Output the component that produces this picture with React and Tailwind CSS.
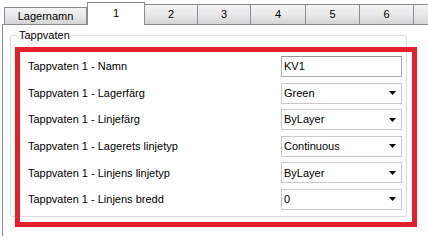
import React from 'react';

const tabs = ['Lagernamn', '1', '2', '3', '4', '5', '6', ''];

const rows = [
  { label: 'Tappvaten 1 - Namn', value: 'KV1', kind: 'text' },
  { label: 'Tappvaten 1 - Lagerfärg', value: 'Green' },
  { label: 'Tappvaten 1 - Linjefärg', value: 'ByLayer' },
  { label: 'Tappvaten 1 - Lagerets linjetyp', value: 'Continuous' },
  { label: 'Tappvaten 1 - Linjens linjetyp', value: 'ByLayer' },
  { label: 'Tappvaten 1 - Linjens bredd', value: '0' },
];

const tabWidths = {
  Lagernamn: 'w-[83px] h-[17px] border-l',
  '1': 'w-[58px]',
  '2': 'w-[53px] h-[20px]',
  '3': 'w-[53px] h-[20px]',
  '4': 'w-[55px] h-[20px]',
  '5': 'w-[54px] h-[20px]',
  '6': 'w-[54px] h-[20px]',
  '': 'w-[60px] h-[20px]',
};

const Arrow = () => (
  <svg width="7" height="4" viewBox="0 0 7 4" className="shrink-0">
    <path d="M0 0h7L3.5 4z" fill="#000" />
  </svg>
);

const Field = ({ value, kind }) => {
  if (kind === 'text') {
    return (
      <div className="w-[121px] h-[21px] border border-[#abadb3] border-t-[#8e949c] bg-white flex items-center pl-[2px]">
        {value}
      </div>
    );
  }
  return (
    <div className="w-[121px] h-[21px] border border-[#cacaca] bg-white flex items-center justify-between pl-[2px] pr-[5px]">
      <span>{value}</span>
      <Arrow />
    </div>
  );
};

export default function App() {
  return (
    <div
      className="relative w-[428px] h-[236px] overflow-hidden bg-white text-[11px] text-black"
      style={{ fontFamily: '"Liberation Sans", Arial, sans-serif' }}
    >
      {/* tab strip */}
      <div className="ml-[2px] pl-[2px] h-[25px] flex items-end border-b border-[#898c95]">
        {tabs.map((tab) => {
          const selected = tab === '1';
          return (
            <div
              key={tab || 'more'}
              className={`shrink-0 flex items-center justify-center border-t border-[#898c95] ${tabWidths[tab]} ${
                selected
                  ? 'h-[23px] -mb-px relative z-10 bg-white border-l border-r pb-[2px]'
                  : 'border-r bg-linear-to-b from-[#f4f4f4] via-[#e9e9e9] to-[#d4d4d4]'
              }`}
            >
              {tab}
            </div>
          );
        })}
      </div>

      {/* tab page */}
      <div className="ml-[2px] h-[211px] border-l border-[#898c95] pt-[4px] pl-[7px]">
        <fieldset className="w-[397px] border border-[#d5dfe5] rounded-[3px]">
          <legend className="ml-[6px] px-[2px] leading-[13px]">Tappvaten</legend>
          <div className="flex flex-col gap-[5.6px] pt-[14px] pb-[6px] pl-[17px] pr-[4px]">
            {rows.map((row) => (
              <div key={row.label} className="flex items-center justify-between h-[21px]">
                <span>{row.label}</span>
                <Field value={row.value} kind={row.kind} />
              </div>
            ))}
          </div>
        </fieldset>
      </div>

      {/* red highlight */}
      <div className="absolute left-[15px] top-[47px] w-[402px] h-[180px] border-[5px] border-[#e3202b] pointer-events-none" />
    </div>
  );
}
